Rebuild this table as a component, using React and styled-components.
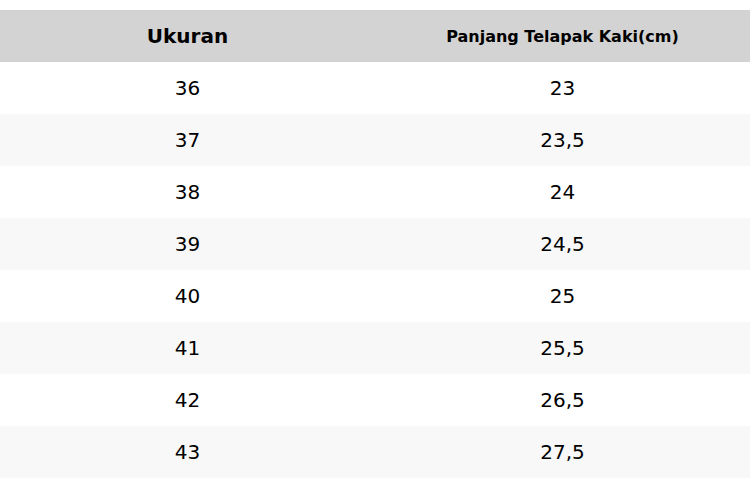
import React from "react";
import styled, { createGlobalStyle } from "styled-components";

const Global = createGlobalStyle`
  html, body { margin: 0; padding: 0; background: #ffffff; }
  body { font-family: "DejaVu Sans", Verdana, sans-serif; color: #000; }
`;

const Page = styled.div`
  padding-top: 10px;
`;

const Table = styled.table`
  width: 750px;
  border-collapse: collapse;
  table-layout: fixed;
`;

const HeadCell = styled.th`
  height: 52px;
  padding: 0;
  background: #d3d3d3;
  font-weight: bold;
  font-size: ${(p) => p.$size}px;
  text-align: center;
  vertical-align: middle;
  width: 50%;
`;

const Row = styled.tr`
  height: 52px;
  background: ${(p) => (p.$striped ? "#f8f8f8" : "#ffffff")};
`;

const Cell = styled.td`
  padding: 0;
  font-size: 20px;
  text-align: center;
  vertical-align: middle;
`;

const data = [
  ["36", "23"],
  ["37", "23,5"],
  ["38", "24"],
  ["39", "24,5"],
  ["40", "25"],
  ["41", "25,5"],
  ["42", "26,5"],
  ["43", "27,5"],
];

export default function App() {
  return (
    <Page>
      <Global />
      <Table>
        <thead>
          <tr>
            <HeadCell $size={20}>Ukuran</HeadCell>
            <HeadCell $size={16}>Panjang Telapak Kaki(cm)</HeadCell>
          </tr>
        </thead>
        <tbody>
          {data.map(([size, len], i) => (
            <Row key={size} $striped={i % 2 === 1}>
              <Cell>{size}</Cell>
              <Cell>{len}</Cell>
            </Row>
          ))}
        </tbody>
      </Table>
    </Page>
  );
}
